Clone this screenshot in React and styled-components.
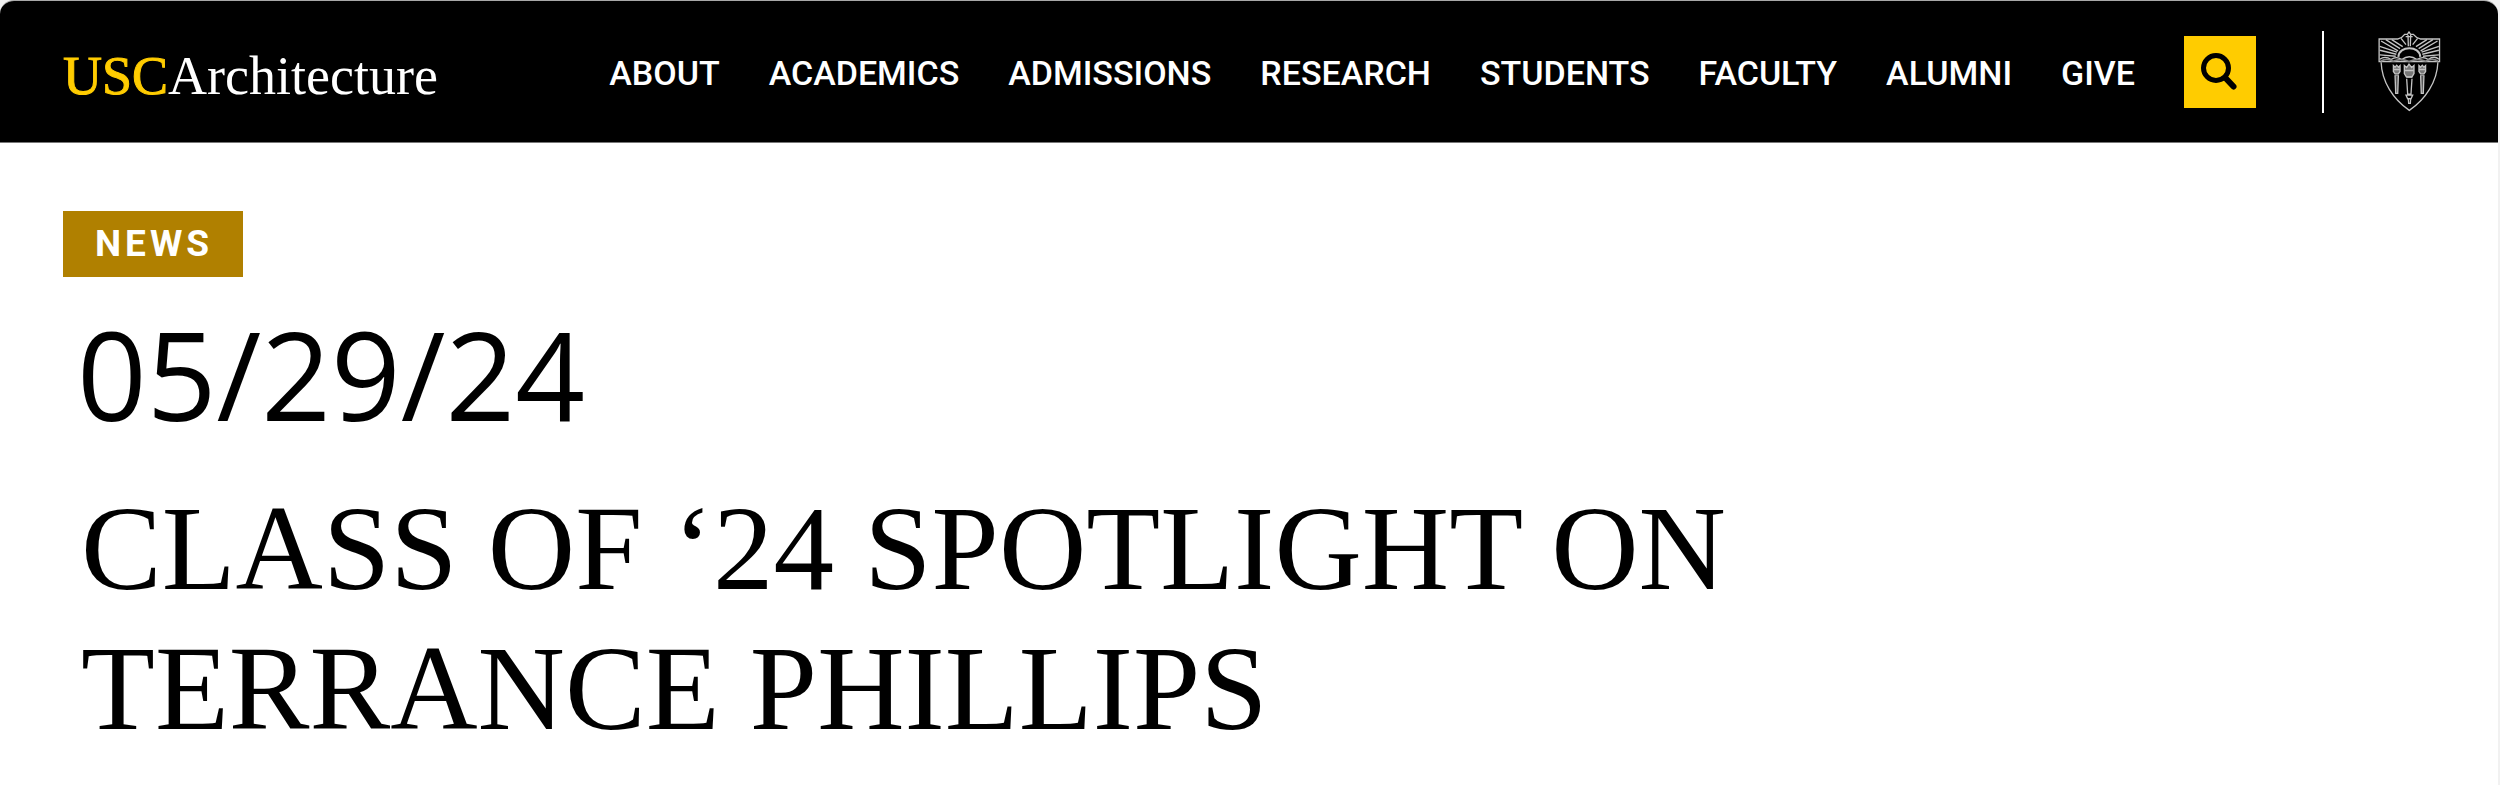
// App.jsx
import React from 'react';
import styled, { createGlobalStyle } from 'styled-components';

const GlobalStyle = createGlobalStyle`
    * {
        box-sizing: border-box;
    }

    body {
        margin: 0;
        background-color: #f1f1f1;
    }
`;

const Page = styled.div`
    min-height: 100vh;
    margin-right: 2px;
    background-color: white;
    border-top: 1px solid #a8a8a8;
    border-radius: 14px 14px 0 0;
    overflow: hidden;
`;

const Header = styled.header`
    display: flex;
    align-items: center;
    justify-content: space-between;
    height: 142px;
    padding: 0 57px 0 63px;
    background-color: black;
    border-bottom: 1px solid #777;
`;

const Logo = styled.a`
    padding-top: 8px;
    font-family: 'Liberation Serif', 'Times New Roman', serif;
    font-size: 54px;
    line-height: 64px;
    color: white;
    text-decoration: none;
`;

const LogoMark = styled.span`
    color: #ffcc00;
    -webkit-text-stroke: 1px #ffcc00;
`;

const HeaderRight = styled.div`
    display: flex;
    align-items: center;
`;

const Nav = styled.nav`
    display: flex;
    gap: 49px;
    margin-right: 49px;
    padding-top: 2px;
`;

const NavLink = styled.a`
    font-family: Roboto, sans-serif;
    font-size: 34px;
    font-weight: 500;
    line-height: 40px;
    color: white;
    text-decoration: none;

    &:hover {
        color: #ffcc00;
    }
`;

const SearchButton = styled.button`
    display: flex;
    align-items: center;
    justify-content: center;
    width: 72px;
    height: 72px;
    padding: 0;
    border: none;
    background-color: #ffcc00;
    cursor: pointer;
`;

const Divider = styled.span`
    width: 2px;
    height: 82px;
    margin: 0 53px 0 66px;
    background-color: white;
`;

const ShieldLink = styled.a`
    display: flex;
`;

const Article = styled.main`
    padding: 68px 63px 0;
`;

const Tag = styled.a`
    display: inline-block;
    padding: 0 30px 0 32px;
    background-color: #b08000;
    font-family: Roboto, sans-serif;
    font-size: 37px;
    font-weight: 700;
    line-height: 66px;
    letter-spacing: 4px;
    color: white;
    text-decoration: none;
    vertical-align: top;
`;

const PostDate = styled.time`
    display: block;
    margin-top: 25px;
    padding-left: 14px;
    font-family: 'Open Sans', sans-serif;
    font-size: 122px;
    font-weight: 500;
    line-height: 144px;
    color: black;
`;

const Title = styled.h1`
    max-width: 80%;
    margin: 32px 0 0;
    padding-left: 18px;
    font-family: 'Liberation Serif', 'Times New Roman', serif;
    font-size: 121px;
    font-weight: 400;
    line-height: 140px;
    color: black;
`;

const SearchIcon = () => (
    <svg width="40" height="40" viewBox="0 0 40 40" fill="none" stroke="black" aria-hidden="true">
        <circle cx="16" cy="16" r="12.5" strokeWidth="5" />
        <path d="M25.5 26 L33.5 34.5" strokeWidth="6" strokeLinecap="round" />
    </svg>
);

// Side torches are the same shape, the middle one is longer
const Torch = ({ x, end }) => (
    <g>
        <path d={`M${x - 10} 200 l5 5 5-6 5 6 5-5 v18 l-5 7 h-10 l-5-7z`} fill="#777" />
        <path d={`M${x - 10} 212 h20 M${x - 6} 230 h12`} />
        <path d={`M${x - 5} 230 L${x - 3} ${end} h6 L${x + 5} 230`} fill="#555" />
    </g>
);

const Shield = () => (
    <svg width="64" height="81" viewBox="228 96 192 244" fill="none" stroke="#c4c4c4" strokeWidth="4" aria-hidden="true">
        <path d="M234 120 H291 Q304 116 311 106 L319 106 L324 99 L329 106 L337 106 Q345 116 358 120 H416 V188 H234z" />
        <path d="M240 190 C242 248 276 302 325 335 C374 302 409 248 411 190" />
        {/* rays */}
        <path d="M240 126 L291 156 M254 122 L297 149 M272 122 L305 143 M300 118 L315 137" />
        <path d="M410 126 L359 156 M396 122 L353 149 M378 122 L345 143 M350 118 L335 137" />
        <path d="M236 142 L288 160 M236 154 L286 166 M236 168 L284 172 M414 142 L362 160 M414 154 L364 166 M414 168 L366 172" />
        <path d="M321 108 L322 142 M329 108 L328 142 M314 113 H335" />
        {/* sun and clouds */}
        <path d="M292 174 C293 139 357 139 358 174" strokeWidth="6" />
        <path d="M236 181 Q252 169 270 182 Q286 170 302 182 Q325 165 348 182 Q366 170 382 182 Q400 169 414 181" />
        <path d="M238 187 Q258 176 276 187 Q300 177 324 188 Q350 177 374 187 Q394 176 412 187" stroke="#888" strokeWidth="5" />
        {/* torches */}
        <Torch x={287} end={284} />
        <Torch x={364} end={284} />
        <path d="M310 200 l7 6 7-10 8 10 7-6 v24 l-6 10 h-17 l-6-10z" fill="#777" />
        <path d="M312 215 H338 M316 235 H334 M317 240 L320 286 H330 L333 240 M315 289 H335 L330 300 H320z M322 300 L323 314 H328 L329 300" />
    </svg>
);

const links = ['ABOUT', 'ACADEMICS', 'ADMISSIONS', 'RESEARCH', 'STUDENTS', 'FACULTY', 'ALUMNI', 'GIVE'];

const App = () => {
    return (
        <>
            <GlobalStyle />
            <Page>
                <Header>
                    <Logo href="#home">
                        <LogoMark>USC</LogoMark>Architecture
                    </Logo>
                    <HeaderRight>
                        <Nav>
                            {links.map((link) => (
                                <NavLink key={link} href={`#${link.toLowerCase()}`}>{link}</NavLink>
                            ))}
                        </Nav>
                        <SearchButton type="button" aria-label="Search">
                            <SearchIcon />
                        </SearchButton>
                        <Divider />
                        <ShieldLink href="#usc" aria-label="USC">
                            <Shield />
                        </ShieldLink>
                    </HeaderRight>
                </Header>
                <Article>
                    <Tag href="#news">NEWS</Tag>
                    <PostDate dateTime="2024-05-29">05/29/24</PostDate>
                    <Title>CLASS OF ‘24 SPOTLIGHT ON TERRANCE PHILLIPS</Title>
                </Article>
            </Page>
        </>
    );
};

export default App;
